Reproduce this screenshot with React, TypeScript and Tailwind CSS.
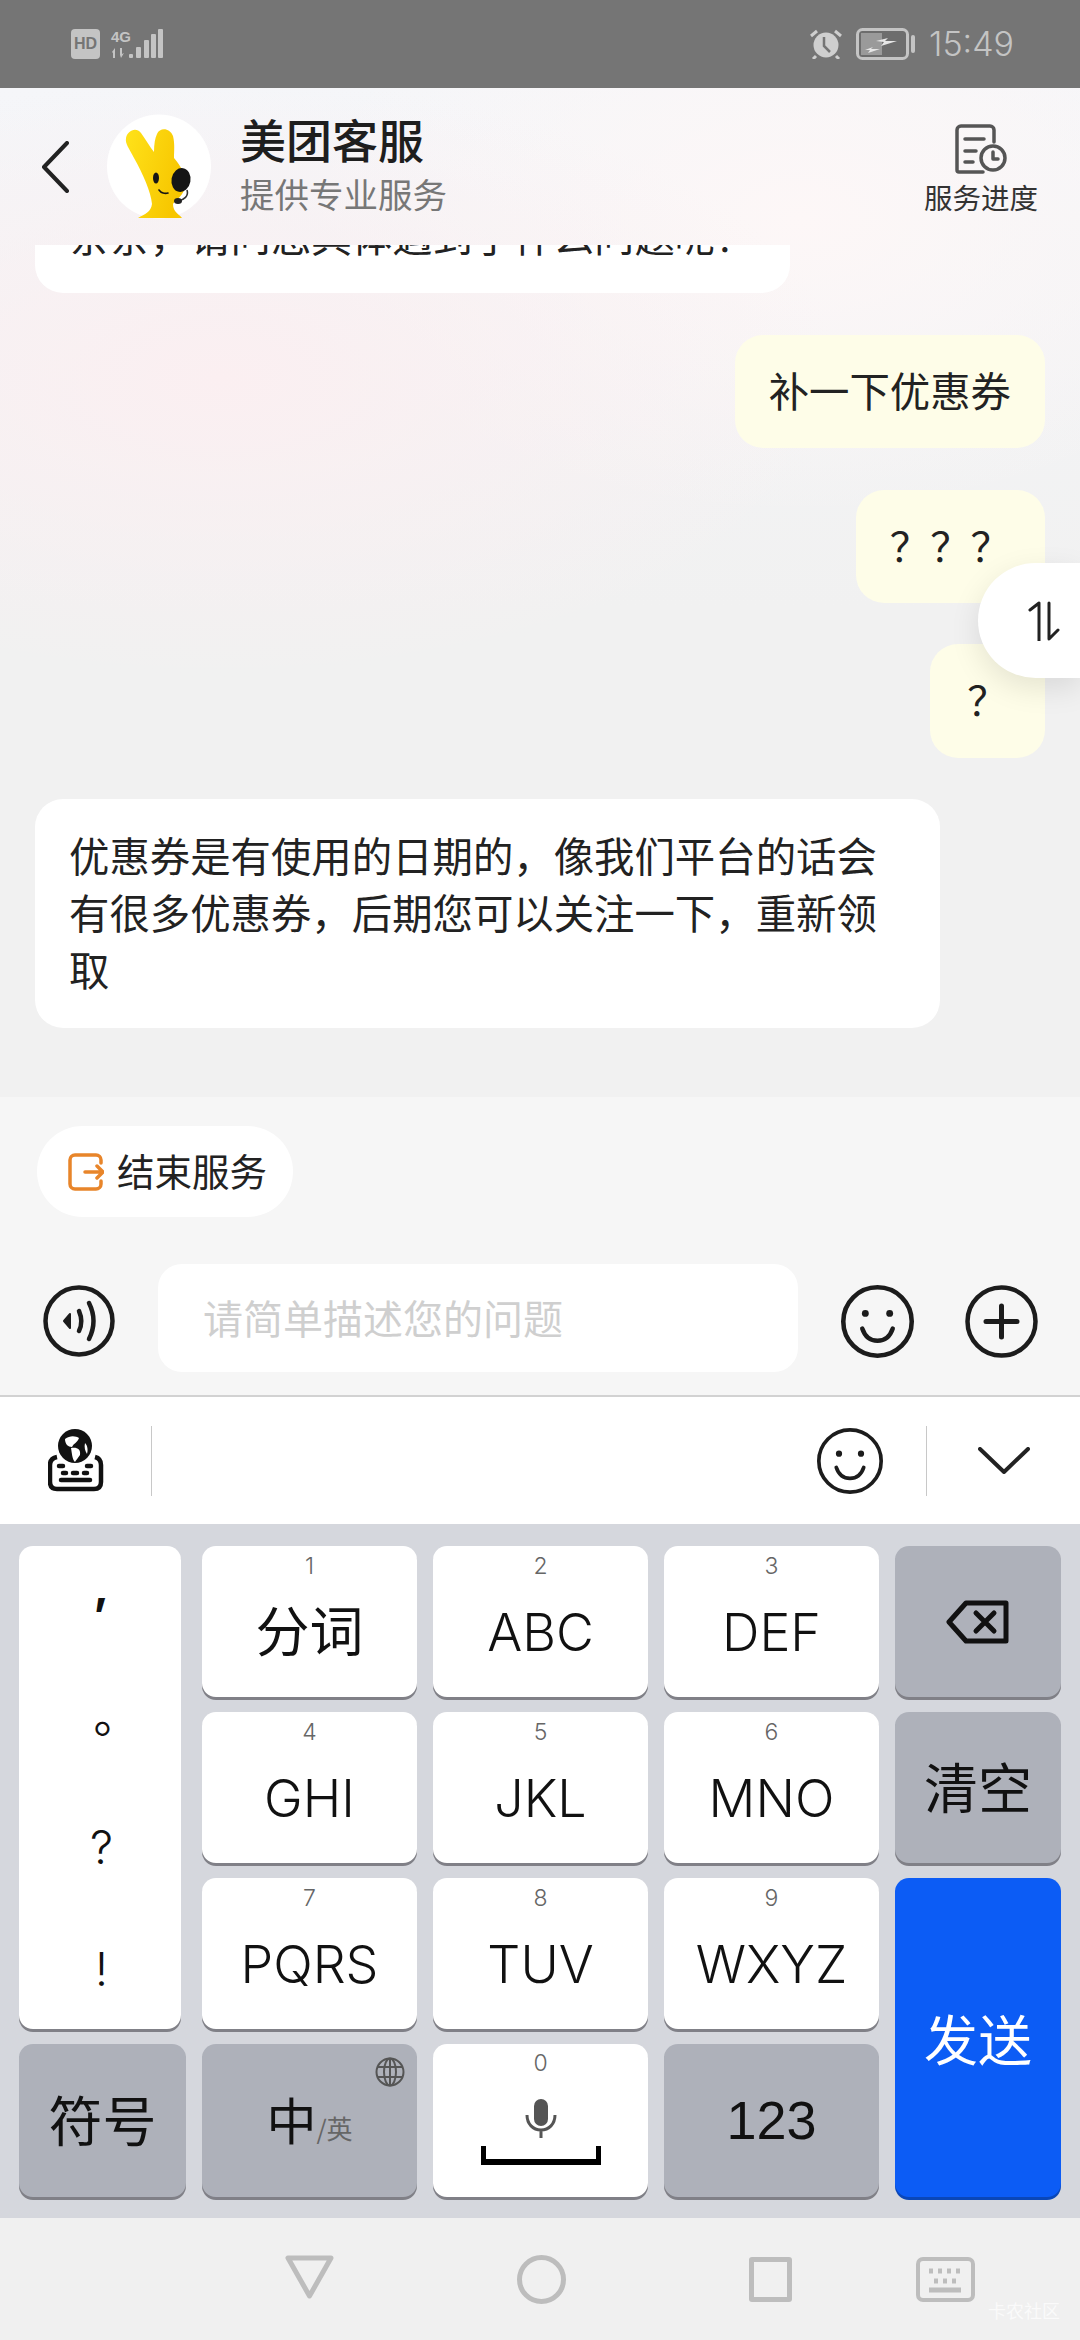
import React from 'react';

const cjk = { fontFamily: '"Noto Sans CJK SC", sans-serif' };
const inter = { fontFamily: 'Inter, "Noto Sans CJK SC", sans-serif' };

const Smiley = ({ size, stroke }: { size: number; stroke: number }) => (
  <svg width={size} height={size} viewBox="0 0 72 72" fill="none" stroke="#1c1c1c" strokeWidth={stroke} strokeLinecap="round">
    <circle cx="36" cy="36" r={36 - stroke / 2} />
    <circle cx="24" cy="28" r="3.4" fill="#1c1c1c" stroke="none" />
    <circle cx="48" cy="28" r="3.4" fill="#1c1c1c" stroke="none" />
    <path d="M21 43c3 9 9 12 15 12s12-3 15-12" />
  </svg>
);

const Mascot = () => (
  <svg width="104" height="105" viewBox="0 0 104 105">
    <defs>
      <linearGradient id="mascot" x1="0" y1="0" x2="1" y2="0.4">
        <stop offset="0" stopColor="#ffe21a" />
        <stop offset="1" stopColor="#f7c600" />
      </linearGradient>
    </defs>
    <circle cx="52" cy="52.5" r="52" fill="#fff" />
    <path d="M31 104C38 100 44 98 45 90C44 78 36 60 27 44C22 34 18 30 19 24C20 17 29 12 34 19C39 26 43 33 47 38C47 30 48 24 50 20C53 13 63 14 66 22C68 30 67 38 67 44C74 52 78 60 78 70C78 82 68 86 66 90C66 98 72 100 75 104Z" fill="url(#mascot)" />
    <ellipse cx="74" cy="66" rx="9.500" ry="12" fill="#151515" transform="rotate(10 74 66)" />
    <ellipse cx="49" cy="64" rx="3" ry="5.500" fill="#151515" />
    <path d="M52 76c2 3 6 4 9 3" fill="none" stroke="#151515" strokeWidth="1.6" strokeLinecap="round" />
    <path d="M80 76c2 6-3 10-9 11" fill="none" stroke="#333" strokeWidth="1.6" />
    <ellipse cx="71" cy="87" rx="4" ry="3" fill="#222" />
  </svg>
);

const Key = ({ digit, label, zh = false }: { digit: string; label: string; zh?: boolean }) => (
  <div className="flex flex-col items-center rounded-[14px] bg-white pt-[5px] shadow-[0_3px_0_#808087]">
    <span className="text-[23px] leading-[30px] font-light text-[#666]" style={inter}>{digit}</span>
    <span className={`mt-[21px] leading-[62px] text-[#111] ${zh ? 'text-[54px] font-normal' : 'text-[52px] font-light'}`} style={inter}>{label}</span>
  </div>
);

export default function App() {
  return (
    <div className="flex h-[2340px] w-[1080px] flex-col overflow-hidden bg-[#f1f1f1]" style={cjk}>
      {/* status bar */}
      <div className="flex h-[88px] shrink-0 items-center justify-between bg-[#757575] pr-[66px] pl-[71px] text-[#c4c4c4]">
        <div className="flex items-center gap-[10px]">
          <div className="flex h-[30px] w-[29px] items-center justify-center rounded-[4px] bg-[#c4c4c4] text-[16px] leading-none font-bold text-[#757575]" style={{ fontFamily: '"Liberation Sans", sans-serif' }}>HD</div>
          <svg width="54" height="32" viewBox="0 0 54 32" fill="#c4c4c4">
            <text x="1" y="14" fontSize="15" fontWeight="700" fontFamily="Liberation Sans">4G</text>
            <path d="M2 24l3-4v10h-2v-5zM10 20h2v6l2-1-3 5-1-3z" />
            <rect x="19" y="26" width="4" height="4" rx="1" />
            <rect x="26" y="19" width="5" height="11" rx="1" />
            <rect x="34" y="12" width="5" height="18" rx="1" />
            <rect x="41" y="6" width="5" height="24" rx="1" />
            <rect x="48" y="1" width="5" height="29" rx="1" />
          </svg>
        </div>
        <div className="flex items-center gap-[14px]">
          <svg width="32" height="30" viewBox="0 0 32 30" fill="#cfcfcf">
            <circle cx="16" cy="16" r="12.500" />
            <path d="M14 8v9l6 6" fill="none" stroke="#757575" strokeWidth="2.500" />
            <path d="M1 7l6-5M31 7l-6-5M6 27l-3 3M26 27l3 3" stroke="#cfcfcf" strokeWidth="3" />
          </svg>
          <svg width="59" height="32" viewBox="0 0 59 32">
            <rect x="1.500" y="1.500" width="50" height="29" rx="5" fill="#6d6d6d" stroke="#c4c4c4" strokeWidth="3" />
            <rect x="5" y="5" width="21" height="22" fill="#9a9a9a" />
            <path d="M20 13l12-3-3 3 12 0-16 5 3-4zM9 22l8-3-2 2 9 0-12 4 2-3z" fill="#e6e6e6" />
            <rect x="55" y="7" width="4" height="18" rx="2" fill="#c4c4c4" />
          </svg>
          <span className="text-[34px] leading-none font-light" style={{ fontFamily: 'Inter, sans-serif' }}>15:49</span>
        </div>
      </div>

      {/* chat screen */}
      <div className="relative flex min-h-0 flex-1 flex-col bg-[radial-gradient(ellipse_620px_300px_at_220px_290px,#fbeff1_0%,rgba(251,239,241,0)_100%),radial-gradient(ellipse_500px_300px_at_800px_130px,#fdf7f7_0%,rgba(253,247,247,0)_100%),linear-gradient(180deg,#f5f6f9_0px,#f1f1f1_520px)]">
        <header className="flex h-[157px] shrink-0 items-center pr-[42px] pl-[41px]">
          <svg width="28" height="52" viewBox="0 0 28 52" fill="none" stroke="#222" strokeWidth="4" strokeLinecap="round" strokeLinejoin="round">
            <path d="M26 2L3 26l23 24" />
          </svg>
          <div className="ml-[38px] shrink-0"><Mascot /></div>
          <div className="mt-[-8px] ml-[29px] flex-1">
            <div className="text-[46px] leading-[56px] font-medium text-[#1e1e1e]">美团客服</div>
            <div className="mt-[4px] text-[34.5px] leading-[46px] text-[#777]">提供专业服务</div>
          </div>
          <div className="flex flex-col items-center pt-[8px]">
            <svg width="54" height="50" viewBox="0 0 54 50" fill="none" stroke="#555" strokeWidth="3.5" strokeLinecap="round" strokeLinejoin="round">
              <path d="M40 18V6a4 4 0 0 0-4-4H7a4 4 0 0 0-4 4v40a2 2 0 0 0 2 2h24" />
              <path d="M11 15h19M11 27h11M11 38h8" />
              <circle cx="39" cy="34" r="12" />
              <path d="M39 28v7h5" />
            </svg>
            <span className="mt-[3px] text-[28.5px] leading-[40px] text-[#333]">服务进度</span>
          </div>
        </header>

        {/* messages */}
        <div className="flex min-h-0 flex-1 flex-col items-end gap-[41px] overflow-hidden px-[35px] text-[40.4px] leading-[57px] text-[#222]">
          <div className="mt-[-65px] mb-[1px] w-[755px] self-start rounded-[28px] bg-white px-[34px] pt-[26px] pb-[30px]">亲亲，请问您具体遇到了什么问题呢？</div>
          <div className="mb-[1px] rounded-[28px] bg-[#fefde8] px-[34px] pt-[26px] pb-[30px]">补一下优惠券</div>
          <div className="rounded-[28px] bg-[#fefde8] px-[34px] pt-[26px] pb-[30px]">？？？</div>
          <div className="w-[115px] rounded-[28px] bg-[#fefde8] pt-[26px] pb-[31px] text-center">？</div>
          <div className="w-[905px] self-start rounded-[28px] bg-white px-[34px] pt-[27px] pb-[31px]">优惠券是有使用的日期的，像我们平台的话会有很多优惠券，后期您可以关注一下，重新领取</div>
        </div>

        {/* scroll switch */}
        <div className="absolute top-[475px] right-0 flex h-[115px] w-[102px] items-center rounded-l-[58px] bg-white pl-[50px] shadow-[0_10px_30px_rgba(0,0,0,0.1)]">
          <svg width="32" height="40" viewBox="0 0 32 40" fill="none" stroke="#222" strokeWidth="3" strokeLinecap="round" strokeLinejoin="round">
            <path d="M2 9l9-7v38M21 2v36l9-9" />
          </svg>
        </div>

        {/* input panel */}
        <div className="h-[298px] shrink-0 bg-[#f6f6f6] pt-[29px]">
          <div className="ml-[37px] flex h-[91px] w-[256px] items-center gap-[13px] rounded-full bg-white pl-[31px]">
            <svg width="36" height="38" viewBox="0 0 36 38" fill="none" stroke="#e8852a" strokeWidth="3.5" strokeLinecap="round" strokeLinejoin="round">
              <path d="M33 10V7a5 5 0 0 0-5-5H7a5 5 0 0 0-5 5v24a5 5 0 0 0 5 5h21a5 5 0 0 0 5-5v-3" />
              <path d="M17 19h17M29 13l6 6-6 6" />
            </svg>
            <span className="mt-[-4px] text-[37.5px] leading-[50px] text-[#222]">结束服务</span>
          </div>
          <div className="mt-[47px] flex items-center pr-[42px] pl-[43px]">
            <svg className="mt-[6px]" width="72" height="72" viewBox="0 0 72 72" fill="none" stroke="#1c1c1c" strokeWidth="4.5" strokeLinecap="round">
              <circle cx="36" cy="36" r="33.500" />
              <path d="M27 29l-6 7 6 7z" fill="#1c1c1c" strokeWidth="2" strokeLinejoin="round" />
              <path d="M36 26c3 7 3 14 0 20M46 18c6 12 6 24 0 36" />
            </svg>
            <div className="ml-[43px] flex h-[108px] w-[640px] items-center rounded-[24px] bg-white pb-[2px] pl-[45px] text-[40px] text-[#cfcfcf]">请简单描述您的问题</div>
            <div className="mt-[6px] ml-[43px]"><Smiley size={73} stroke={4.5} /></div>
            <svg className="mt-[6px] ml-[51px]" width="73" height="73" viewBox="0 0 73 73" fill="none" stroke="#1c1c1c" strokeWidth="4.5" strokeLinecap="round">
              <circle cx="36.500" cy="36.500" r="34" />
              <path d="M36.500 21v31M21 36.500h31" strokeWidth="5" />
            </svg>
          </div>
        </div>
      </div>

      {/* keyboard toolbar */}
      <div className="flex h-[129px] shrink-0 items-center border-t-[2px] border-[#d2d2d2] bg-white">
        <svg className="ml-[48px]" width="56" height="64" viewBox="0 0 56 64">
          <path d="M9 28C4 29 2 32 2 36V53C2 58 5 60 9 60H46C50 60 53 58 53 53V36C53 32 51 29 47 28" fill="none" stroke="#111" strokeWidth="4.500" />
          <circle cx="27" cy="17" r="17" fill="#111" />
          <path d="M17 10C22 6 28 7 31 9C29 14 26 14 24 18C20 18 17 15 17 10ZM23 19C29 18 33 20 32 26C30 29 28 31 27 33C24 30 24 24 23 19ZM37 14C40 17 40 22 39 25C37 22 36 18 37 14Z" fill="#fff" />
          <path d="M11 37h4M39 37h4M15 44h3M25 44h4M36 44h3" stroke="#111" strokeWidth="4.500" strokeLinecap="round" />
          <path d="M13 51h29" stroke="#111" strokeWidth="4.500" strokeLinecap="round" />
        </svg>
        <div className="ml-[47px] h-[70px] w-[1px] bg-[#c8c8c8]" />
        <div className="ml-auto"><Smiley size={66} stroke={4} /></div>
        <div className="ml-[43px] h-[70px] w-[1px] bg-[#c8c8c8]" />
        <svg className="mr-[50px] ml-[51px]" width="52" height="27" viewBox="0 0 52 27" fill="none" stroke="#222" strokeWidth="4" strokeLinecap="round" strokeLinejoin="round">
          <path d="M2 2l24 23L50 2" />
        </svg>
      </div>

      {/* keyboard */}
      <div className="grid h-[694px] shrink-0 grid-cols-[167px_215px_215px_215px_166px] grid-rows-[151px_151px_151px_153px] gap-x-[16px] gap-y-[15px] bg-[#d5d7dd] pt-[22px] pl-[19px]">
        <div className="row-span-3 flex w-[162px] flex-col items-center rounded-[14px] bg-white pt-[28px] pl-[3px] text-[46px] font-normal text-[#111] shadow-[0_3px_0_#808087]" style={inter}>
          <span className="h-[124px] -translate-y-[18px] leading-[60px] font-bold">,</span>
          <span className="h-[122px] translate-x-[15px] -translate-y-[13px] leading-[60px]">。</span>
          <span className="h-[122px] -translate-y-[3px] leading-[60px] font-light">?</span>
          <span className="-translate-y-[3px] leading-[60px] font-light">!</span>
        </div>
        <Key digit="1" label="分词" zh />
        <Key digit="2" label="ABC" />
        <Key digit="3" label="DEF" />
        <div className="flex items-center justify-center rounded-[14px] bg-[#aeb1ba] shadow-[0_3px_0_#808087]">
          <svg width="64" height="44" viewBox="0 0 64 44" fill="none" stroke="#111" strokeWidth="5" strokeLinecap="round" strokeLinejoin="round">
            <path d="M20 3h40v38H20L3 22z" />
            <path d="M30 13l18 18M48 13L30 31" />
          </svg>
        </div>
        <Key digit="4" label="GHI" />
        <Key digit="5" label="JKL" />
        <Key digit="6" label="MNO" />
        <div className="flex items-center justify-center rounded-[14px] bg-[#aeb1ba] pb-[4px] text-[54px] text-[#111] shadow-[0_3px_0_#808087]">清空</div>
        <Key digit="7" label="PQRS" />
        <Key digit="8" label="TUV" />
        <Key digit="9" label="WXYZ" />
        <div className="row-span-2 flex items-center justify-center rounded-[14px] bg-[#0c5cf5] text-[54px] text-white shadow-[0_3px_0_#0a47b8]">发送</div>
        <div className="flex items-center justify-center rounded-[14px] bg-[#aeb1ba] pb-[4px] text-[54px] text-[#111] shadow-[0_3px_0_#808087]">符号</div>
        <div className="relative flex items-center justify-center rounded-[14px] bg-[#aeb1ba] pb-[4px] shadow-[0_3px_0_#808087]">
          <span className="text-[50px] text-[#111]">中</span>
          <span className="mt-[18px] text-[26px] text-[#666]">/英</span>
          <svg className="absolute top-[13px] right-[12px]" width="30" height="30" viewBox="0 0 30 30" fill="none" stroke="#555" strokeWidth="2">
            <circle cx="15" cy="15" r="13.500" />
            <ellipse cx="15" cy="15" rx="6" ry="13.500" />
            <path d="M2 10h26M2 20h26M15 2v26" />
          </svg>
        </div>
        <div className="flex flex-col items-center rounded-[14px] bg-white pt-[4px] shadow-[0_3px_0_#808087]">
          <span className="text-[23px] leading-[30px] font-light text-[#666]" style={inter}>0</span>
          <svg className="mt-[20px]" width="32" height="40" viewBox="0 0 32 40" fill="none" stroke="#555" strokeWidth="3">
            <rect x="9" y="1" width="14" height="27" rx="7" fill="#555" stroke="none" />
            <path d="M2 17c0 9 6 15 14 15s14-6 14-15M16 32v8" />
          </svg>
          <div className="mt-[8px] h-[19px] w-[120px] border-x-[5px] border-b-[6px] border-black" />
        </div>
        <div className="flex items-center justify-center rounded-[14px] bg-[#aeb1ba] text-[54px] font-light text-[#111] shadow-[0_3px_0_#808087]" style={{ fontFamily: '"Liberation Sans", sans-serif' }}>123</div>
      </div>

      {/* nav bar */}
      <div className="relative flex h-[122px] shrink-0 items-start bg-[#f0f0f0] pt-[37px] pl-[285px]">
        <svg width="49" height="44" viewBox="0 0 49 44" fill="none" stroke="#bdbdbd" strokeWidth="5" strokeLinejoin="round">
          <path d="M3 3h43L24.500 41z" />
        </svg>
        <svg className="ml-[183px]" width="49" height="49" viewBox="0 0 49 49" fill="none" stroke="#bdbdbd" strokeWidth="5">
          <circle cx="24.500" cy="24.500" r="22" />
        </svg>
        <div className="mt-[2px] ml-[183px] h-[45px] w-[43px] rounded-[3px] border-[5px] border-[#bdbdbd]" />
        <svg className="mt-[2px] ml-[124px]" width="59" height="45" viewBox="0 0 59 45" fill="none" stroke="#bdbdbd">
          <rect x="2" y="2" width="55" height="41" rx="5" strokeWidth="4" />
          <path d="M13 14h4M22 14h4M31 14h4M40 14h4M18 24h4M27 24h4M36 24h4" strokeWidth="5" />
          <path d="M13 33h32" strokeWidth="5" />
        </svg>
        <span className="absolute top-[80px] left-[988px] text-[18px] leading-[24px] text-white opacity-70">卡农社区</span>
      </div>
    </div>
  );
}
